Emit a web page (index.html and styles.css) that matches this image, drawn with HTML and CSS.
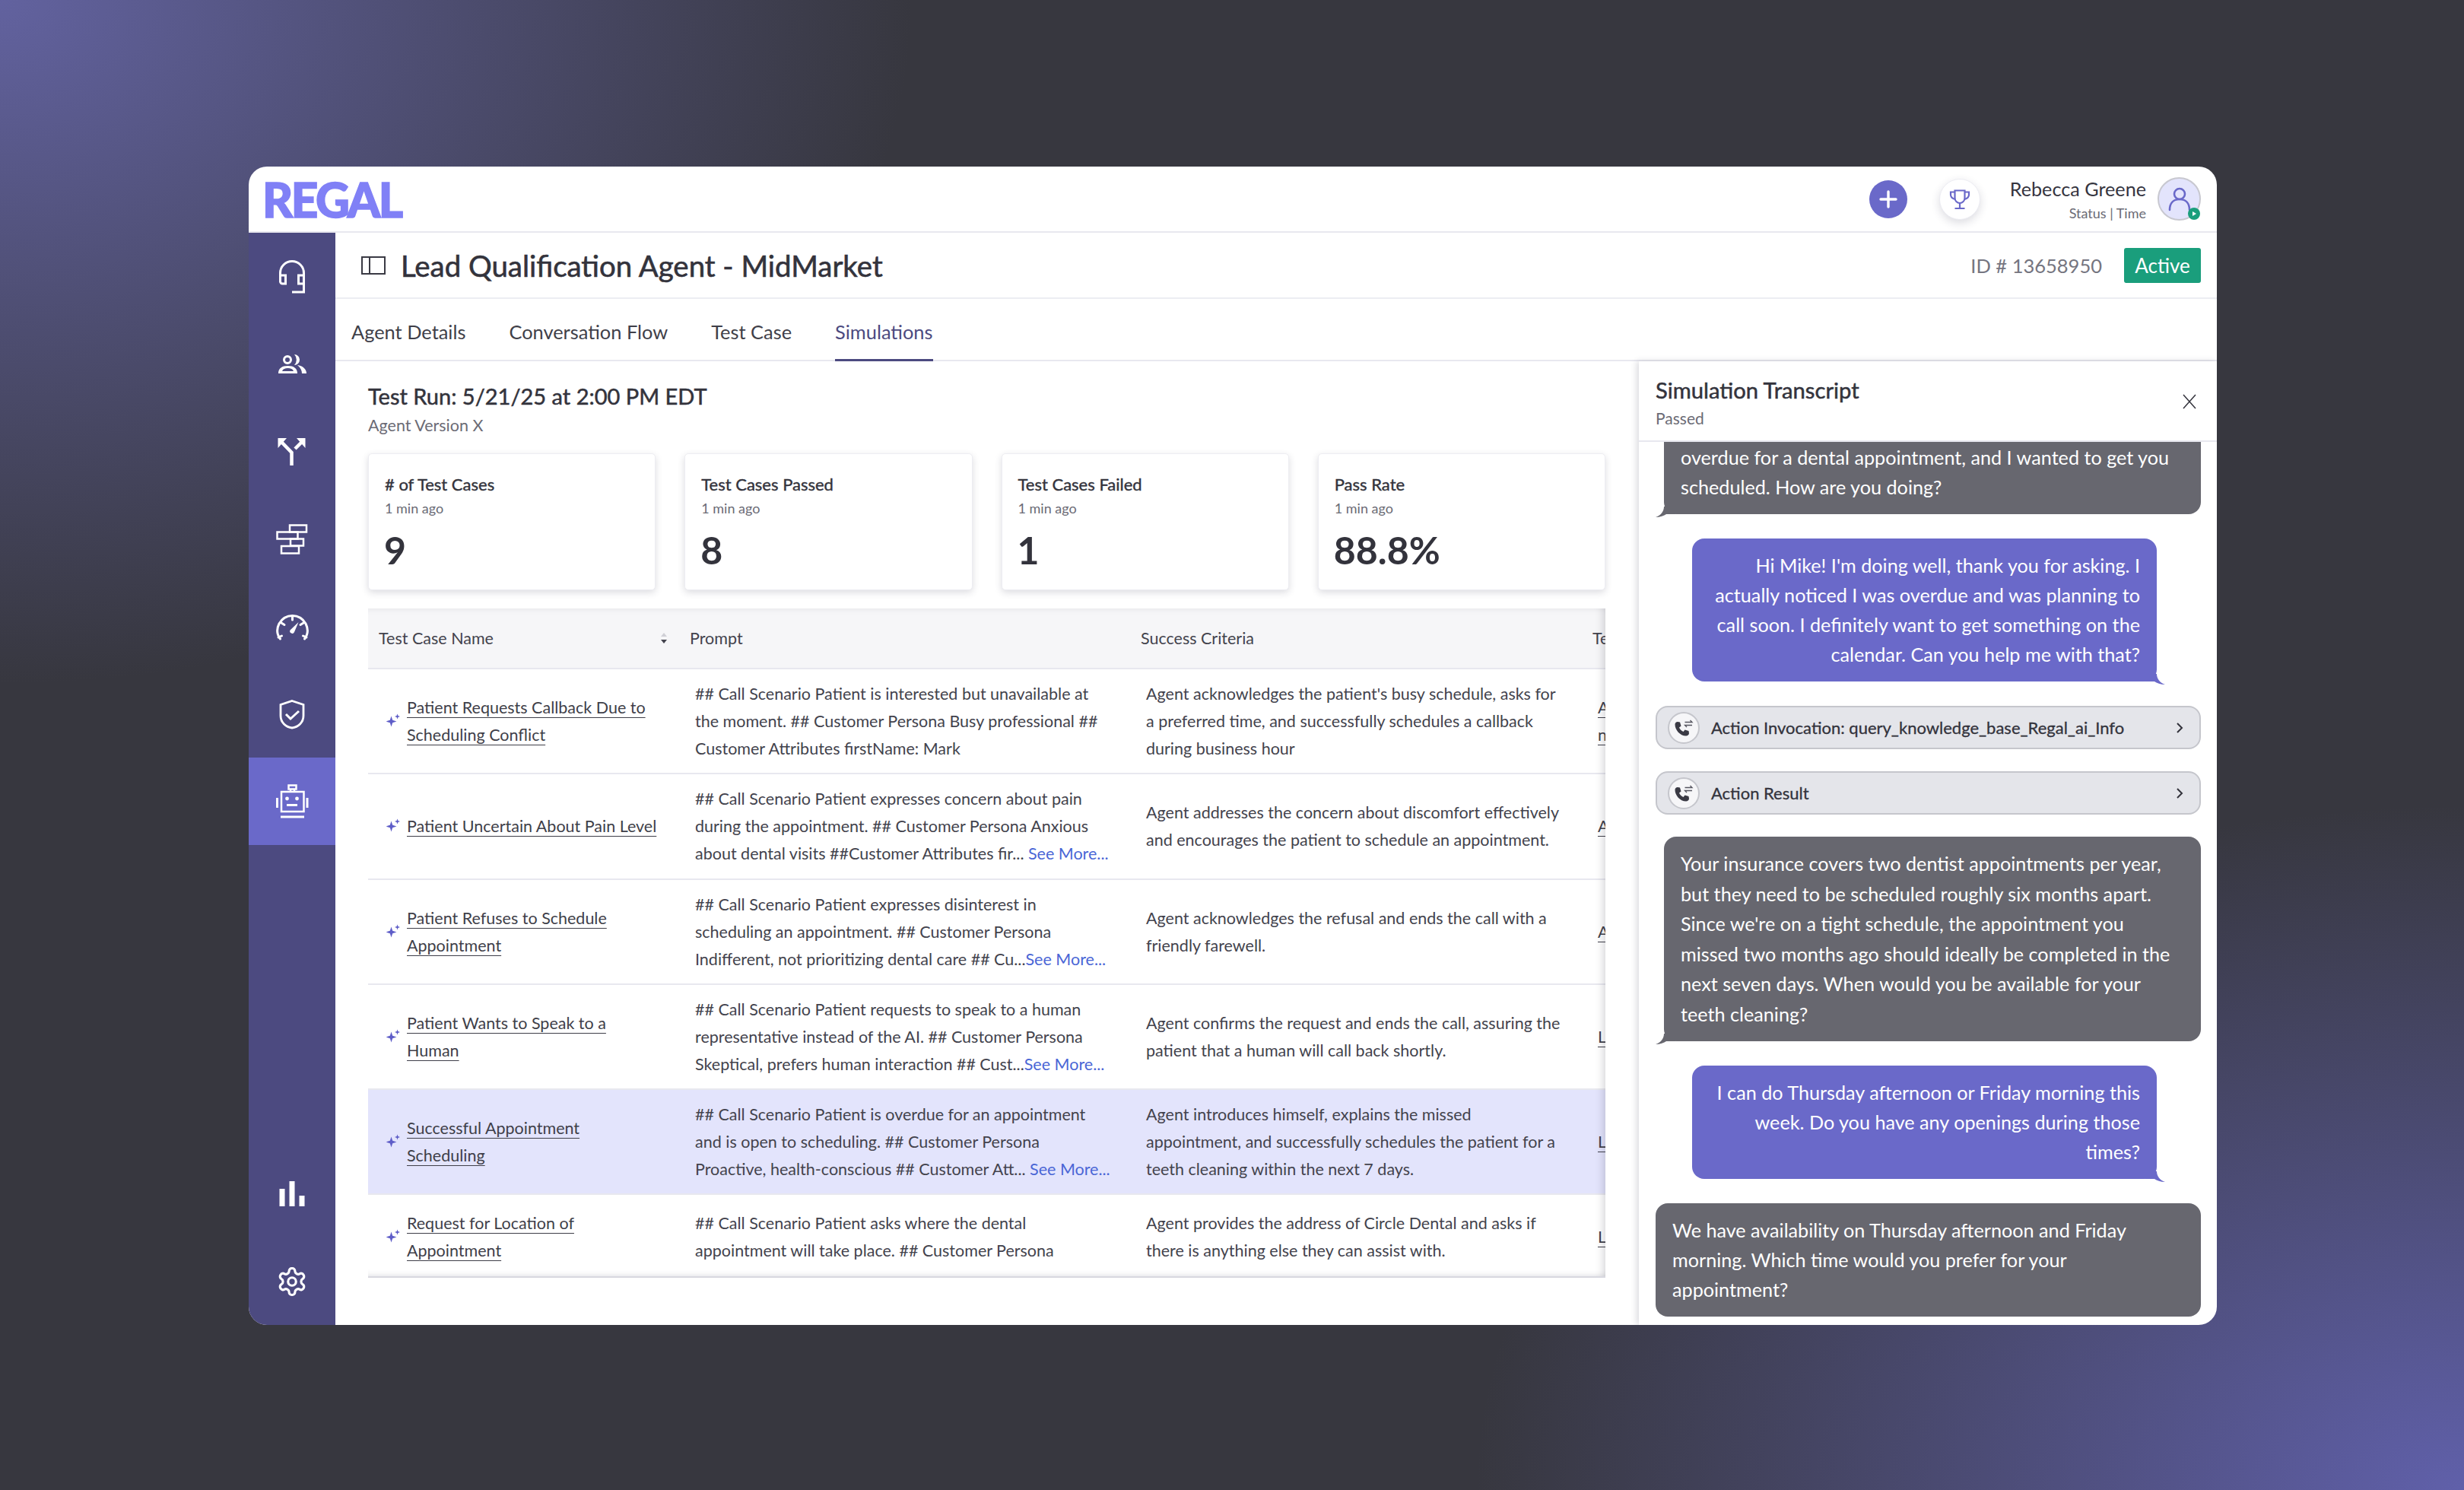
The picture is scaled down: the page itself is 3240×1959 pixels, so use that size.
FILE: index.html
```html
<!DOCTYPE html>
<html lang="en">
<head>
    <meta charset="UTF-8">
    <meta name="viewport" content="width=device-width, initial-scale=1.0">
    <title>Lead Qualification Agent - MidMarket</title>
    <link rel="stylesheet" href="styles.css">
</head>
<body>
<div class="window">
    <header class="topbar">
        <div class="logo">REGAL</div>
        <div class="topbar-right">
            <button class="add-btn">
                <svg width="26" height="26" viewBox="0 0 26 26"><path d="M13 3v20M3 13h20" stroke="#fff" stroke-width="3.4" stroke-linecap="round"/></svg>
            </button>
            <button class="trophy-btn">
                <svg width="28" height="28" viewBox="0 0 28 28" fill="none" stroke="#6a69c9" stroke-width="2.2"><path d="M7.5 2.5h13v10a6.5 6.5 0 0 1-13 0z"/><path d="M7.5 4.5H2v3.5c0 3 2 5 6 6M20.5 4.5H26v3.5c0 3-2 5-6 6M14 19v7M7.5 26h13"/></svg>
            </button>
            <div class="user-text">
                <div class="user-name">Rebecca Greene</div>
                <div class="user-status">Status | Time</div>
            </div>
            <div class="avatar">
                <svg width="30" height="32" viewBox="0 0 30 32" fill="none" stroke="#6a69c9" stroke-width="2.6"><circle cx="15" cy="9" r="7"/><path d="M2 30c0-9 5-14 13-14s13 5 13 14" stroke-linecap="round"/></svg>
                <span class="avatar-dot"><svg width="8" height="8" viewBox="0 0 8 8"><path d="M2 1l5 3-5 3z" fill="#fff"/></svg></span>
            </div>
        </div>
    </header>
    <div class="body-row">
        <nav class="sidebar">
            <a class="nav-item"><svg width="48" height="48" viewBox="0 0 48 48" fill="none" stroke="#fff" stroke-width="3"><path d="M8.5 31V19a15.500 15.500 0 0 1 31 0v12"/><path d="M8.500 22h7v11h-4a3 3 0 0 1-3-3zM39.500 22h-7v11h7"/><path d="M39.500 31v13H24"/></svg></a>
            <a class="nav-item"><svg width="48" height="48" viewBox="0 0 48 48" fill="#fff"><circle cx="18" cy="18" r="4.500" fill="none" stroke="#fff" stroke-width="3"/><path d="M27 11a7 7 0 0 1 0 14 10 10 0 0 0 0-14z"/><path fill-rule="evenodd" d="M6 36c0-7 5-10 12.500-10S31 29 31 36zM11 33h15c-1-3-4-4-7.500-4S12 30 11 33z"/><path d="M31 25c7 1 12 5 12 11h-6c0-4-2-8-6-11z"/></svg></a>
            <a class="nav-item"><svg width="48" height="48" viewBox="0 0 48 48" fill="#fff"><path d="M23.500 42V25L10 11M28 20l9-9" fill="none" stroke="#fff" stroke-width="4.500"/><path d="M5.500 6H17L5.500 19zM41.500 6H30l11.500 13z"/></svg></a>
            <a class="nav-item"><svg width="48" height="48" viewBox="0 0 48 48" fill="none" stroke="#fff" stroke-width="2.500"><rect x="21" y="5.500" width="22" height="9"/><rect x="4.500" y="14.500" width="27" height="9"/><rect x="22" y="23.500" width="17" height="9"/><rect x="10" y="33" width="23" height="9.500"/></svg></a>
            <a class="nav-item"><svg width="48" height="48" viewBox="0 0 48 48" fill="none" stroke="#fff" stroke-width="3"><path d="M8.500 40C4 34 3.500 27 7 20 11 13 17 9.500 24.500 9.500S38 13 42 20c3.500 7 3 14-1.500 20" stroke-linecap="round"/><path d="M24.500 10v5M10 19l4 2.500M39 19l-4 2.500M6 38l4.500-2M43 38l-4.500-2" stroke-linecap="round"/><path d="M32.500 18l-5.500 13a3 3 0 0 1-5.500-2.500z" fill="#fff" stroke="none"/></svg></a>
            <a class="nav-item"><svg width="48" height="48" viewBox="0 0 48 48" fill="none" stroke="#fff" stroke-width="2.800"><path d="M24 6.500l15 5V26c0 9-7 15-15 16-8-1-15-7-15-16V11.500z"/><path d="M16 24l6 6 11-10" stroke-width="3"/></svg></a>
            <a class="nav-item active"><svg width="48" height="48" viewBox="0 0 48 48" fill="none" stroke="#fff" stroke-width="2.500"><rect x="19.500" y="2.500" width="10" height="5"/><path d="M22 8v2M27 8v2"/><rect x="10" y="11" width="29.500" height="26"/><circle cx="17.500" cy="20" r="2.400" fill="#fff" stroke="none"/><circle cx="30.500" cy="20" r="2.400" fill="#fff" stroke="none"/><path d="M17 28.500h14M4.500 19v13M44 19v13M9 44h31" stroke-width="3"/></svg></a>
            <a class="nav-item bottom-first"><svg width="48" height="48" viewBox="0 0 48 48" fill="#fff"><rect x="7.500" y="17" width="7" height="23"/><rect x="20.500" y="7" width="7" height="33"/><rect x="33.500" y="26" width="7" height="14"/></svg></a>
            <a class="nav-item"><svg width="42" height="42" viewBox="0 0 24 24" fill="none" stroke="#fff" stroke-width="1.800"><path d="M12.220 2h-.44a2 2 0 0 0-2 2v.18a2 2 0 0 1-1 1.730l-.43.250a2 2 0 0 1-2 0l-.15-.08a2 2 0 0 0-2.730.730l-.22.380a2 2 0 0 0 .730 2.730l.15.100a2 2 0 0 1 1 1.720v.510a2 2 0 0 1-1 1.740l-.15.090a2 2 0 0 0-.730 2.730l.22.380a2 2 0 0 0 2.730.730l.15-.08a2 2 0 0 1 2 0l.43.250a2 2 0 0 1 1 1.730V20a2 2 0 0 0 2 2h.44a2 2 0 0 0 2-2v-.18a2 2 0 0 1 1-1.730l.43-.25a2 2 0 0 1 2 0l.15.080a2 2 0 0 0 2.730-.730l.22-.390a2 2 0 0 0-.730-2.730l-.15-.08a2 2 0 0 1-1-1.740v-.5a2 2 0 0 1 1-1.740l.15-.09a2 2 0 0 0 .730-2.730l-.22-.38a2 2 0 0 0-2.730-.730l-.15.080a2 2 0 0 1-2 0l-.43-.25a2 2 0 0 1-1-1.730V4a2 2 0 0 0-2-2z"/><circle cx="12" cy="12" r="3"/></svg></a>
        </nav>
        <main class="main">
            <div class="title-bar">
                <svg class="panel-icon" width="32" height="24" viewBox="0 0 32 24" fill="none" stroke="#3a3a44" stroke-width="2"><rect x="1" y="1" width="30" height="22"/><path d="M11 1v22"/></svg>
                <h1 class="page-title">Lead Qualification Agent - MidMarket</h1>
                <span class="agent-id">ID # 13658950</span>
                <span class="status-pill">Active</span>
            </div>
            <div class="tabs">
                <a class="tab">Agent Details</a>
                <a class="tab">Conversation Flow</a>
                <a class="tab">Test Case</a>
                <a class="tab current">Simulations</a>
            </div>
            <div class="content">
                <section class="results">
                    <h2 class="run-title">Test Run: 5/21/25 at 2:00 PM EDT</h2>
                    <p class="run-version">Agent Version X</p>
                    <div class="cards">
                        <div class="card"><div class="card-title"># of Test Cases</div><div class="card-time">1 min ago</div><div class="card-value">9</div></div>
                        <div class="card"><div class="card-title">Test Cases Passed</div><div class="card-time">1 min ago</div><div class="card-value">8</div></div>
                        <div class="card"><div class="card-title">Test Cases Failed</div><div class="card-time">1 min ago</div><div class="card-value">1</div></div>
                        <div class="card"><div class="card-title">Pass Rate</div><div class="card-time">1 min ago</div><div class="card-value">88.8%</div></div>
                    </div>
                    <div class="table-wrap">
                        <table class="cases">
                            <colgroup><col class="col-name"><col class="col-prompt"><col class="col-criteria"><col class="col-tag"></colgroup>
                            <thead>
                            <tr>
                                <th class="th-name">Test Case Name
                                    <svg class="sort" width="10" height="16" viewBox="0 0 10 16"><path d="M5 1l4 5H1z" fill="#d0d0d6"/><path d="M5 15l4-5H1z" fill="#44444e"/></svg>
                                </th>
                                <th>Prompt</th>
                                <th>Success Criteria</th>
                                <th>Test Type</th>
                            </tr>
                            </thead>
                            <tbody>
                            <tr>
                                <td><div class="case-name"><svg class="spark" width="20" height="20" viewBox="0 0 20 20"><use href="#spark"/></svg><a>Patient Requests Callback Due to Scheduling Conflict</a></div></td>
                                <td class="prompt">## Call Scenario Patient is interested but unavailable at the moment. ## Customer Persona Busy professional ## Customer Attributes firstName: Mark</td>
                                <td>Agent acknowledges the patient's busy schedule, asks for a preferred time, and successfully schedules a callback during business hour</td>
                                <td class="tag"><a>Appointment</a><br><a>needed</a></td>
                            </tr>
                            <tr>
                                <td><div class="case-name"><svg class="spark" width="20" height="20" viewBox="0 0 20 20"><use href="#spark"/></svg><a>Patient Uncertain About Pain Level</a></div></td>
                                <td class="prompt">## Call Scenario Patient expresses concern about pain during the appointment. ## Customer Persona Anxious about dental visits ##Customer Attributes fir... <a class="more">See More...</a></td>
                                <td>Agent addresses the concern about discomfort effectively and encourages the patient to schedule an appointment.</td>
                                <td class="tag"><a>Appointment</a></td>
                            </tr>
                            <tr>
                                <td><div class="case-name"><svg class="spark" width="20" height="20" viewBox="0 0 20 20"><use href="#spark"/></svg><a>Patient Refuses to Schedule Appointment</a></div></td>
                                <td class="prompt">## Call Scenario Patient expresses disinterest in scheduling an appointment. ## Customer Persona Indifferent, not prioritizing dental care ## Cu...<a class="more">See More...</a></td>
                                <td>Agent acknowledges the refusal and ends the call with a friendly farewell.</td>
                                <td class="tag"><a>Appointment</a></td>
                            </tr>
                            <tr>
                                <td><div class="case-name"><svg class="spark" width="20" height="20" viewBox="0 0 20 20"><use href="#spark"/></svg><a>Patient Wants to Speak to a Human</a></div></td>
                                <td class="prompt">## Call Scenario Patient requests to speak to a human representative instead of the AI. ## Customer Persona Skeptical, prefers human interaction ## Cust...<a class="more">See More...</a></td>
                                <td>Agent confirms the request and ends the call, assuring the patient that a human will call back shortly.</td>
                                <td class="tag"><a>Live Agent</a></td>
                            </tr>
                            <tr class="selected">
                                <td><div class="case-name"><svg class="spark" width="20" height="20" viewBox="0 0 20 20"><use href="#spark"/></svg><a>Successful Appointment Scheduling</a></div></td>
                                <td class="prompt">## Call Scenario Patient is overdue for an appointment and is open to scheduling. ## Customer Persona Proactive, health-conscious ## Customer Att... <a class="more">See More...</a></td>
                                <td>Agent introduces himself, explains the missed appointment, and successfully schedules the patient for a teeth cleaning within the next 7 days.</td>
                                <td class="tag"><a>Lead</a></td>
                            </tr>
                            <tr class="last">
                                <td><div class="case-name"><svg class="spark" width="20" height="20" viewBox="0 0 20 20"><use href="#spark"/></svg><a>Request for Location of Appointment</a></div></td>
                                <td class="prompt">## Call Scenario Patient asks where the dental appointment will take place. ## Customer Persona</td>
                                <td>Agent provides the address of Circle Dental and asks if there is anything else they can assist with.</td>
                                <td class="tag"><a>Location</a></td>
                            </tr>
                            </tbody>
                        </table>
                    </div>
                </section>
                <aside class="transcript">
                    <div class="transcript-head">
                        <div>
                            <h3 class="transcript-title">Simulation Transcript</h3>
                            <div class="transcript-status">Passed</div>
                        </div>
                        <svg class="close" width="20" height="20" viewBox="0 0 20 20" stroke="#33333c" stroke-width="1.500"><path d="M2 1l16 18M18 1L2 19"/></svg>
                    </div>
                    <div class="chat">
                        <div class="bubble agent tail">Hi Mike, this is Rebecca from Circle Dental. You are<br>overdue for a dental appointment, and I wanted to get you scheduled. How are you doing?</div>
                        <div class="bubble user tail">Hi Mike! I'm doing well, thank you for asking. I actually noticed I was overdue and was planning to call soon. I definitely want to get something on the calendar. Can you help me with that?</div>
                        <div class="action">
                            <span class="action-icon"><svg width="30" height="30" viewBox="0 0 30 30"><use href="#call"/></svg></span>
                            <span class="action-label">Action Invocation: query_knowledge_base_Regal_ai_Info</span>
                            <svg width="12" height="18" viewBox="0 0 12 18" fill="none" stroke="#33333c" stroke-width="2"><path d="M3 3l6 6-6 6"/></svg>
                        </div>
                        <div class="action">
                            <span class="action-icon"><svg width="30" height="30" viewBox="0 0 30 30"><use href="#call"/></svg></span>
                            <span class="action-label">Action Result</span>
                            <svg width="12" height="18" viewBox="0 0 12 18" fill="none" stroke="#33333c" stroke-width="2"><path d="M3 3l6 6-6 6"/></svg>
                        </div>
                        <div class="bubble agent tail long">Your insurance covers two dentist appointments per year, but they need to be scheduled roughly six months apart. Since we're on a tight schedule, the appointment you missed two months ago should ideally be completed in the next seven days. When would you be available for your teeth cleaning?</div>
                        <div class="bubble user tail">I can do Thursday afternoon or Friday morning this week. Do you have any openings during those times?</div>
                        <div class="bubble agent wide">We have availability on Thursday afternoon and Friday morning. Which time would you prefer for your appointment?</div>
                    </div>
                </aside>
            </div>
        </main>
    </div>
</div>

<svg class="defs" width="0" height="0">
    <symbol id="spark" viewBox="0 0 20 20">
        <path d="M7.500 3.500l1.700 5.300 5.300 1.700-5.300 1.700-1.700 5.300-1.700-5.300-5.300-1.700 5.300-1.700z" fill="#5f5ec8"/>
        <path d="M15.500 .5l.9 2.600 2.600.9-2.600.9-.9 2.600-.9-2.600-2.600-.9 2.600-.9z" fill="#5f5ec8"/>
    </symbol>
    <symbol id="call" viewBox="0 0 30 30">
        <path d="M7 7l3 .5 1.500 5-2.500 2c1 2.500 3 4.500 5.500 5.500l2-2.500 5 1.500.5 3c0 2-2 3.500-4 3.500C10 25.500 3.500 17.500 3.500 10.500 3.500 8.500 5 7 7 7z" fill="#3a3a44"/>
        <path d="M16.500 7.500h9.500l-2.500-2.500M26 11.500h-9.500l2.500 2.500" fill="none" stroke="#55555f" stroke-width="1.300"/>
    </symbol>
</svg>
</body>
</html>
```

FILE: styles.css
```css
* {
    box-sizing: border-box;
}

body {
    margin: 0;
    height: 1959px;
    padding: 219px 325px 0 327px;
    overflow: hidden;
    font-family: "Lato", "Open Sans", sans-serif;
    color: #35353f;
    background-color: #37373f;
    background-image:
        radial-gradient(ellipse 1200px 900px at 0 0, #62629f 0, rgba(98, 98, 159, 0) 100%),
        radial-gradient(ellipse 1300px 900px at 100% 100%, #6060aa 0, rgba(96, 96, 170, 0) 100%);
}

.defs {
    position: absolute;
}

.window {
    height: 1523px;
    display: flex;
    flex-direction: column;
    background-color: #fff;
    border-radius: 24px;
    overflow: hidden;
}

.topbar {
    height: 87px;
    flex: none;
    display: flex;
    align-items: center;
    justify-content: space-between;
    padding: 0 21px 0 18px;
    border-bottom: 2px solid #e8e8ef;
}

.logo {
    font-size: 62px;
    font-weight: 900;
    line-height: 60px;
    letter-spacing: -2.500px;
    color: #8080f6;
    -webkit-text-stroke: 1.500px #8080f6;
}

.topbar-right {
    display: flex;
    align-items: center;
}

.add-btn {
    width: 50px;
    height: 50px;
    border: none;
    border-radius: 50%;
    padding: 0;
    display: flex;
    align-items: center;
    justify-content: center;
    background-color: #6a69c9;
}

.trophy-btn {
    width: 54px;
    height: 54px;
    margin-left: 42px;
    border: 1px solid #ececf2;
    border-radius: 50%;
    padding: 0;
    display: flex;
    align-items: center;
    justify-content: center;
    background-color: #fff;
    box-shadow: 0 4px 12px rgba(40, 40, 70, 0.16);
}

.user-text {
    margin-left: 39px;
    text-align: right;
}

.user-name {
    font-size: 25.200px;
    line-height: 32px;
}

.user-status {
    margin-top: 4px;
    font-size: 18px;
    line-height: 24px;
    color: #6b6b75;
}

.avatar {
    position: relative;
    width: 57px;
    height: 57px;
    margin-left: 15px;
    border: 2px solid #c8c8d0;
    border-radius: 50%;
    display: flex;
    align-items: center;
    justify-content: center;
    background-color: #e3e4fc;
}

.avatar-dot {
    position: absolute;
    right: -1px;
    bottom: -1px;
    width: 16px;
    height: 16px;
    border-radius: 50%;
    display: flex;
    align-items: center;
    justify-content: center;
    background-color: #1a9e7c;
}

.body-row {
    flex: 1;
    min-height: 0;
    display: flex;
}

.sidebar {
    width: 114px;
    flex: none;
    display: flex;
    flex-direction: column;
    background-color: #4c4a80;
}

.nav-item {
    height: 115px;
    flex: none;
    display: flex;
    align-items: center;
    justify-content: center;
}

.nav-item.active {
    background-color: #6a69c9;
}

.nav-item.bottom-first {
    margin-top: auto;
}

.main {
    flex: 1;
    min-width: 0;
    display: flex;
    flex-direction: column;
}

.title-bar {
    height: 87px;
    flex: none;
    display: flex;
    align-items: center;
    padding: 0 21px 0 34px;
    border-bottom: 2px solid #ecedf2;
}

.panel-icon {
    flex: none;
}

.page-title {
    margin: 0 0 0 20px;
    font-size: 38.400px;
    font-weight: 400;
    color: #33333c;
    -webkit-text-stroke: 0.600px #33333c;
}

.agent-id {
    margin-left: auto;
    font-size: 25.500px;
    color: #757580;
}

.status-pill {
    width: 101px;
    height: 46px;
    margin-left: 29px;
    border-radius: 3px;
    font-size: 26px;
    line-height: 46px;
    text-align: center;
    color: #fff;
    background-color: #1a9e7c;
}

.tabs {
    height: 82px;
    flex: none;
    display: flex;
    gap: 57px;
    padding: 0 21px;
    border-bottom: 2px solid #e8e8ef;
}

.tab {
    font-size: 25.400px;
    line-height: 86px;
    color: #3f3f49;
}

.tab.current {
    color: #4c4a80;
    border-bottom: 3px solid #4c4a80;
    height: 82px;
}

.content {
    flex: 1;
    min-height: 0;
    display: flex;
}

.results {
    width: 1714px;
    flex: none;
    padding: 28px 44px 0 43px;
}

.run-title {
    margin: 0;
    font-size: 29px;
    font-weight: 400;
    line-height: 36px;
    color: #33333c;
    -webkit-text-stroke: 0.500px #33333c;
}

.run-version {
    margin: 6px 0 0;
    font-size: 21.500px;
    line-height: 28px;
    color: #6b6b75;
}

.cards {
    display: grid;
    grid-template-columns: repeat(4, 1fr);
    gap: 38px;
    margin-top: 23px;
}

.card {
    height: 180px;
    padding: 26px 21px 0;
    border: 1px solid #ededf2;
    border-radius: 5px;
    background-color: #fff;
    box-shadow: 0 3px 10px rgba(40, 40, 60, 0.16);
}

.card-title {
    font-size: 22px;
    font-weight: 400;
    line-height: 28px;
    color: #33333c;
    -webkit-text-stroke: 0.400px #33333c;
}

.card-time {
    margin-top: 5px;
    font-size: 18px;
    line-height: 24px;
    color: #6b6b75;
}

.card-value {
    margin: 12px 0 0 -1px;
    font-size: 50px;
    font-weight: 700;
    line-height: 62px;
    color: #33333c;
}

.table-wrap {
    position: relative;
    height: 880px;
    margin-top: 24px;
    overflow: hidden;
}

.table-wrap::after {
    content: "";
    position: absolute;
    inset: 0;
    box-shadow: inset -14px 0 12px -12px rgba(40, 40, 60, 0.22), inset 0 -8px 8px -8px rgba(40, 40, 60, 0.18), inset 0 8px 8px -8px rgba(40, 40, 60, 0.1);
    border-bottom: 2px solid #d8d8e0;
    pointer-events: none;
}

.cases {
    width: 1896px;
    table-layout: fixed;
    border-collapse: collapse;
    font-size: 21.500px;
    line-height: 36px;
    color: #43434d;
}

.col-name {
    width: 409px;
}

.col-prompt {
    width: 593px;
}

.col-criteria {
    width: 594px;
}

.col-tag {
    width: 300px;
}

.cases th {
    height: 79px;
    padding: 0 14px;
    font-weight: 400;
    text-align: left;
    white-space: nowrap;
    background-color: #f6f6f8;
    border-bottom: 2px solid #e8e8ef;
}

.th-name {
    position: relative;
}

.sort {
    position: absolute;
    right: 15px;
    top: 31px;
}

.cases td {
    height: 138.300px;
    padding: 0 21px;
    vertical-align: middle;
    border-bottom: 2px solid #e8e8ef;
}

.cases tr.last td {
    height: 110px;
    border-bottom: none;
}

.cases tr.selected td {
    background-color: #e3e4fc;
}

.cases td.prompt {
    padding-right: 24px;
}

.case-name {
    display: flex;
    align-items: center;
    padding-left: 2px;
}

.case-name a {
    max-width: 333px;
}

.spark {
    flex: none;
    margin-right: 8px;
}

.case-name a,
.tag a {
    text-decoration: underline;
    text-decoration-thickness: 1px;
    text-underline-offset: 5px;
    color: #3f3f49;
}

.tag {
    white-space: nowrap;
}

.more {
    color: #4a66d6;
}

.transcript {
    flex: 1;
    min-width: 0;
    display: flex;
    flex-direction: column;
    box-shadow: -3px 0 8px rgba(40, 40, 60, 0.16);
    position: relative;
}

.transcript-head {
    height: 106px;
    flex: none;
    display: flex;
    align-items: center;
    justify-content: space-between;
    padding: 4px 26px 0 22px;
    border-bottom: 2px solid #e8e8ef;
}

.transcript-title {
    margin: 0;
    font-size: 29.200px;
    font-weight: 400;
    line-height: 36px;
    color: #33333c;
    -webkit-text-stroke: 0.500px #33333c;
}

.transcript-status {
    margin-top: 6px;
    font-size: 21px;
    line-height: 26px;
    color: #6b6b75;
}

.close {
    margin-top: -2px;
}

.chat {
    flex: 1;
    min-height: 0;
    overflow: hidden;
    display: flex;
    flex-direction: column;
    justify-content: flex-end;
    gap: 32px;
    padding: 0 21px 11px 22px;
}

.bubble {
    position: relative;
    flex: none;
    padding: 16px 22px;
    border-radius: 16px;
    font-size: 25.200px;
    line-height: 39px;
    color: #fff;
}

.bubble.agent {
    margin-left: 11px;
    background-color: #67676f;
}

.bubble.agent.wide {
    margin-left: 0;
}

.bubble.user {
    width: 611px;
    margin-left: 48px;
    text-align: right;
    background-color: #6a69c9;
}

.bubble.long {
    line-height: 39.500px;
}

.bubble.tail::after {
    content: "";
    position: absolute;
    bottom: -4px;
    width: 26px;
    height: 14px;
    background-color: inherit;
}

.bubble.agent.tail::after {
    left: -11px;
    clip-path: path("M11 0C11 6 7 12 0 14 6 14 11 12 14 10H26V0Z");
}

.bubble.user.tail::after {
    right: -11px;
    clip-path: path("M15 0C15 6 19 12 26 14 20 14 15 12 12 10H0V0Z");
}

.action {
    height: 57px;
    flex: none;
    margin-bottom: -3px;
    display: flex;
    align-items: center;
    padding: 0 20px 0 14px;
    border: 2px solid #c5c6cc;
    border-radius: 16px;
    background-color: #e4e5ea;
}

.action-icon {
    width: 42px;
    height: 42px;
    flex: none;
    border: 2px solid #c5c6cc;
    border-radius: 50%;
    display: flex;
    align-items: center;
    justify-content: center;
    background-color: #f6f6f8;
}

.action-label {
    flex: 1;
    margin-left: 15px;
    font-size: 22px;
    font-weight: 400;
    color: #33333c;
    -webkit-text-stroke: 0.300px #33333c;
}
```
